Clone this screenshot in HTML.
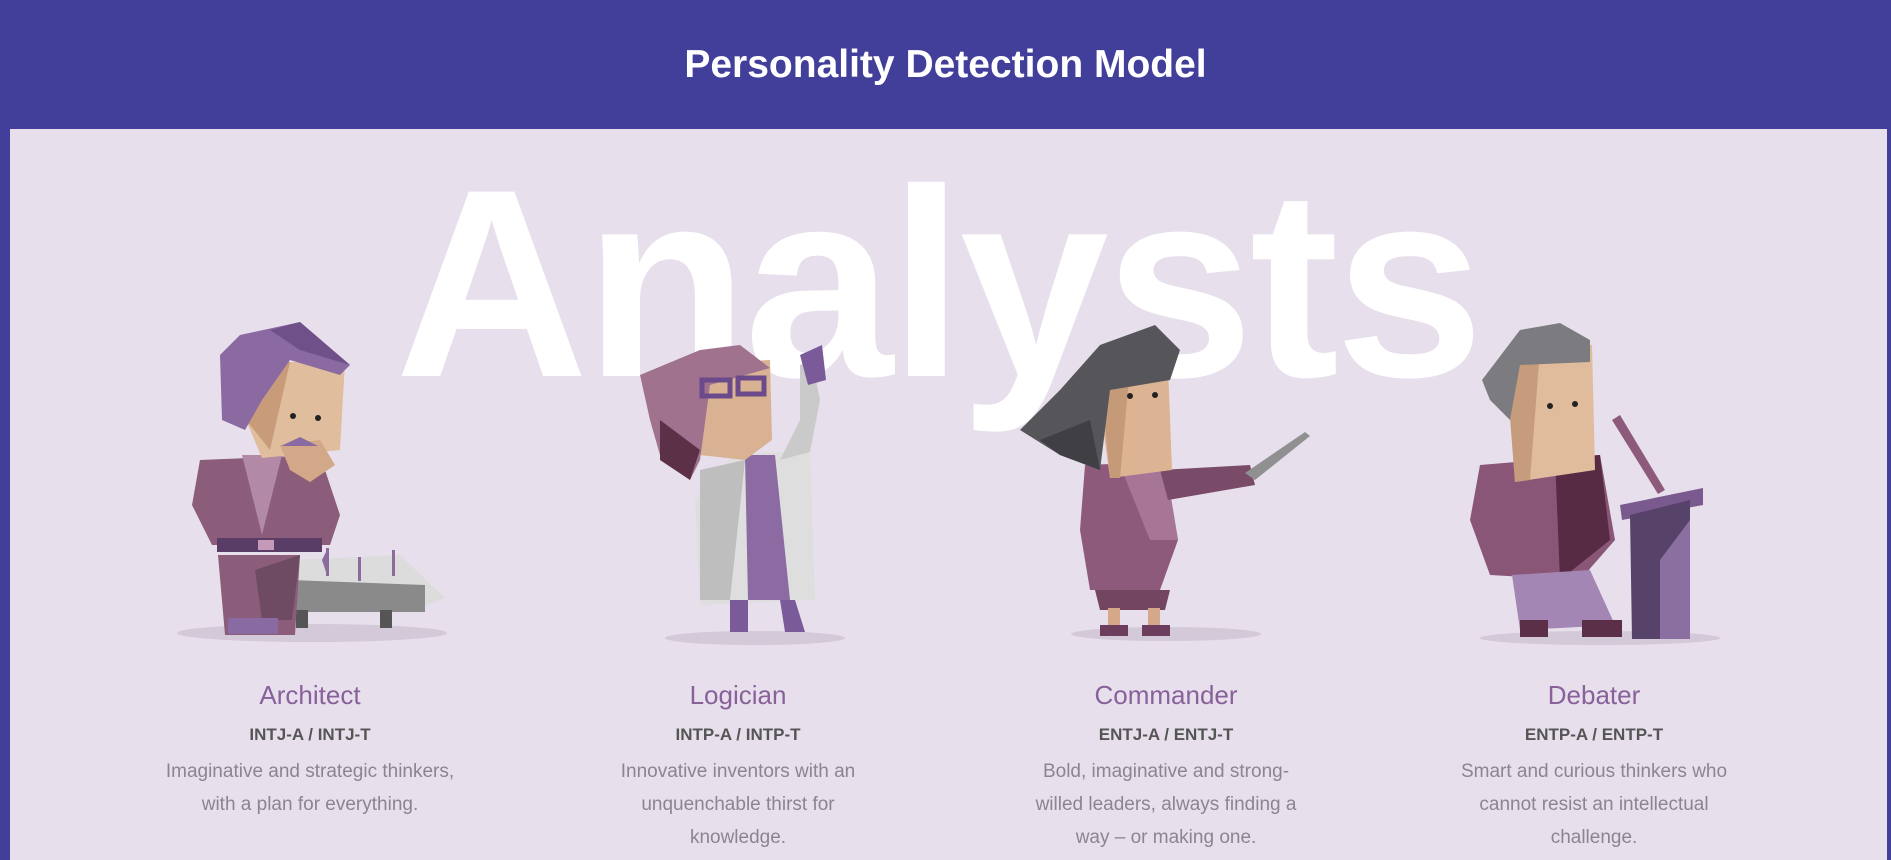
<!DOCTYPE html>
<html><head><meta charset="utf-8"><style>
html,body{margin:0;padding:0;width:1891px;height:860px;overflow:hidden;background:#423f9a;font-family:"Liberation Sans",sans-serif}
.hdr{position:absolute;left:0;top:0;width:1891px;height:129px;background:#423f9a;color:#fff;font-weight:bold;font-size:39px;text-align:center;line-height:130px}
.main{position:absolute;left:10px;top:129px;width:1877px;height:731px;background:#e7e0ec}
.big{position:absolute;left:0;top:149px;width:1891px;text-align:center;font-size:268px;font-weight:bold;color:#fff;letter-spacing:-4px;line-height:1;}
svg{position:absolute;left:0;top:0}
.col{position:absolute;width:340px;text-align:center}
.n{font-size:26px;color:#88619a;height:40px;line-height:40px}
.c{font-size:17px;font-weight:bold;color:#555;height:40px;line-height:40px}
.d{font-size:19px;color:#8a8590;line-height:33px;width:310px;margin:0 auto}
</style></head><body>
<div class="hdr">Personality Detection Model</div>
<div class="main"></div>
<div class="big" style="left:-8px">Analysts</div>
<svg width="1891" height="860" viewBox="0 0 1891 860">
<ellipse cx="312" cy="633" rx="135" ry="9" fill="#d3c9d8"/>
<ellipse cx="755" cy="638" rx="90" ry="7" fill="#d3c9d8"/>
<ellipse cx="1166" cy="634" rx="95" ry="7" fill="#d3c9d8"/>
<ellipse cx="1600" cy="638" rx="120" ry="7" fill="#d3c9d8"/>
<!-- Architect -->
<polygon points="290,560 400,555 445,598 420,608 290,612" fill="#dcdcdc"/>
<polygon points="290,580 425,585 425,612 290,612" fill="#8a8a8a"/>
<rect x="296" y="610" width="12" height="18" fill="#555"/><rect x="380" y="610" width="12" height="18" fill="#555"/>
<polygon points="327,550 327,575 322,560" fill="#8b6a9e"/><rect x="326" y="548" width="3" height="28" fill="#8b6a9e"/>
<rect x="358" y="557" width="3" height="24" fill="#8b6a9e"/><rect x="392" y="550" width="3" height="26" fill="#8b6a9e"/>
<polygon points="218,555 300,555 295,635 225,635" fill="#8c5d7a"/>
<polygon points="255,570 300,555 292,620 262,620" fill="#6e4a63"/>
<rect x="228" y="618" width="50" height="16" fill="#8a6aa2"/>
<polygon points="200,460 320,455 340,515 330,545 212,545 192,505" fill="#8c5d7a"/>
<polygon points="242,455 282,455 262,535" fill="#b28aa6"/>
<rect x="217" y="538" width="105" height="14" fill="#5a3d66"/>
<rect x="258" y="540" width="16" height="10" fill="#c49ab8"/>
<polygon points="243,362 345,362 340,450 262,458 246,420" fill="#e0bd9c"/>
<polygon points="243,362 290,362 270,450 246,420" fill="#c89c7a"/>
<polygon points="280,445 320,440 335,465 310,482 290,470" fill="#d2a888"/>
<polygon points="220,355 240,335 300,322 350,365 340,375 290,360 262,400 245,430 222,420" fill="#8b6aa2"/>
<polygon points="270,330 300,322 350,365 300,350" fill="#6f5088"/>
<polygon points="281,446 300,437 318,446" fill="#8b6aa2"/>
<circle cx="293" cy="416" r="3" fill="#222"/><circle cx="318" cy="418" r="3" fill="#222"/>
<!-- Logician -->
<polygon points="733,455 810,450 815,600 700,605 695,500" fill="#dedede"/>
<polygon points="745,455 775,455 790,600 748,600" fill="#8c6aa2"/>
<polygon points="700,470 745,460 730,600 700,600" fill="#bebebe"/>
<polygon points="780,460 810,452 820,400 812,360 800,365 800,420" fill="#cacaca"/>
<polygon points="800,355 822,345 826,380 808,385" fill="#7a5a98"/>
<polygon points="730,600 748,600 748,632 730,632" fill="#7a5a98"/><polygon points="780,600 795,600 805,632 785,632" fill="#7a5a98"/>
<polygon points="678,365 770,360 772,440 745,460 700,455" fill="#d8b292"/>
<polygon points="640,375 700,350 740,345 770,368 710,385 700,460 690,480 660,455 650,420" fill="#a0728e"/>
<polygon points="660,420 700,450 690,480 660,460" fill="#5c3148"/>
<rect x="702" y="380" width="28" height="16" fill="none" stroke="#6a4a8a" stroke-width="5"/>
<rect x="738" y="378" width="26" height="16" fill="none" stroke="#6a4a8a" stroke-width="5"/>
<!-- Commander -->
<polygon points="1085,465 1165,462 1178,540 1160,590 1090,590 1080,530" fill="#8e5a7c"/>
<polygon points="1120,465 1165,462 1178,540 1150,540" fill="#a77696"/>
<polygon points="1160,470 1250,465 1255,485 1168,500" fill="#7a4b68"/>
<polygon points="1245,473 1305,432 1310,436 1255,480" fill="#909090"/>
<polygon points="1095,590 1170,590 1165,610 1100,610" fill="#744560"/>
<rect x="1108" y="608" width="12" height="20" fill="#d4a888"/><rect x="1148" y="608" width="12" height="20" fill="#d4a888"/>
<polygon points="1100,625 1128,625 1128,636 1100,636" fill="#6d3d5d"/><polygon points="1142,625 1170,625 1170,636 1142,636" fill="#6d3d5d"/>
<polygon points="1095,370 1168,365 1172,470 1110,478" fill="#dcb494"/>
<polygon points="1100,372 1130,368 1120,478 1110,478" fill="#c49a78"/>
<polygon points="1020,430 1060,390 1100,345 1155,325 1180,350 1170,380 1110,390 1100,470 1060,455" fill="#55555a"/>
<polygon points="1060,455 1100,470 1090,420 1040,440" fill="#3f3f44"/>
<circle cx="1130" cy="396" r="3" fill="#222"/><circle cx="1155" cy="395" r="3" fill="#222"/>
<!-- Debater -->
<polygon points="1480,465 1600,455 1615,540 1580,580 1490,575 1470,520" fill="#8a5678"/>
<polygon points="1555,458 1600,455 1610,540 1560,580" fill="#572b44"/>
<polygon points="1512,575 1590,570 1615,625 1560,628 1520,630" fill="#a486b4"/>
<rect x="1520" y="620" width="28" height="17" fill="#5c2f48"/><rect x="1582" y="620" width="40" height="17" fill="#5c2f48"/>
<polygon points="1505,352 1592,345 1595,470 1515,482" fill="#e0bc9c"/>
<polygon points="1505,352 1540,350 1530,480 1515,482" fill="#c69c7c"/>
<polygon points="1482,380 1520,330 1560,323 1590,340 1590,362 1520,365 1510,420 1490,400" fill="#7c7c80"/>
<circle cx="1550" cy="406" r="3" fill="#222"/><circle cx="1575" cy="404" r="3" fill="#222"/>
<polygon points="1612,420 1620,415 1665,490 1658,494" fill="#8e5a7c"/>
<polygon points="1620,505 1703,488 1703,505 1622,520" fill="#7a5a8e"/>
<polygon points="1630,515 1690,500 1690,639 1632,639" fill="#574269"/>
<polygon points="1660,560 1690,520 1690,639 1660,639" fill="#8b6fa0"/>
</svg>
<div class="col" style="left:140px;top:675px"><div class="n">Architect</div><div class="c">INTJ-A / INTJ-T</div><div class="d">Imaginative and strategic thinkers, with a plan for everything.</div></div>
<div class="col" style="left:568px;top:675px"><div class="n">Logician</div><div class="c">INTP-A / INTP-T</div><div class="d" style="width:250px">Innovative inventors with an unquenchable thirst for knowledge.</div></div>
<div class="col" style="left:996px;top:675px"><div class="n">Commander</div><div class="c">ENTJ-A / ENTJ-T</div><div class="d" style="width:270px">Bold, imaginative and strong-willed leaders, always finding a way – or making one.</div></div>
<div class="col" style="left:1424px;top:675px"><div class="n">Debater</div><div class="c">ENTP-A / ENTP-T</div><div class="d" style="width:280px">Smart and curious thinkers who cannot resist an intellectual challenge.</div></div>
</body></html>
